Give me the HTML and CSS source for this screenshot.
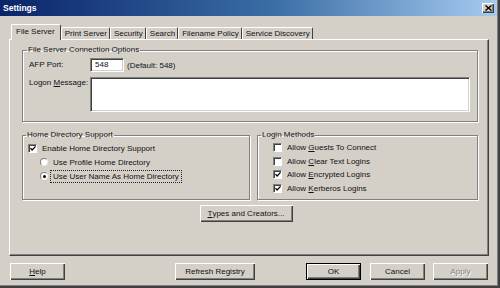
FILE: index.html
```html
<!DOCTYPE html>
<html lang="en">
<head>
    <meta charset="UTF-8">
    <title>Settings</title>
    <link rel="stylesheet" href="styles.css">
</head>
<body>
    <div class="window">
        <div class="titlebar">
            <span class="title">Settings</span>
            <span class="close-btn">
                <svg width="7" height="6" viewBox="0 0 7 6"><path d="M0.5 0.5 L6.5 5.5 M6.5 0.5 L0.5 5.5" stroke="#000" stroke-width="1.4"/></svg>
            </span>
        </div>

        <div class="tabs">
            <div class="tab active">File Server</div>
            <div class="tab">Print Server</div>
            <div class="tab">Security</div>
            <div class="tab">Search</div>
            <div class="tab">Filename Policy</div>
            <div class="tab">Service Discovery</div>
        </div>

        <div class="panel">
            <fieldset class="group group-conn">
                <legend>File Server Connection Options</legend>
                <div class="field-row">
                    <label class="field-label">AFP Port:</label>
                    <div class="textbox port">548</div>
                    <span class="hint">(Default: 548)</span>
                </div>
                <div class="field-row">
                    <label class="field-label">Logon <u>M</u>essage:</label>
                    <div class="textbox message"></div>
                </div>
            </fieldset>

            <div class="group-row">
                <fieldset class="group group-home">
                    <legend>Home Directory Support</legend>
                    <div class="opt">
                        <span class="check"><svg width="7" height="7" viewBox="0 0 7 7"><path d="M0.5 3 L2.5 5.2 L6.5 1" stroke="#000" stroke-width="1.5" fill="none"/></svg></span>
                        <span>Enable Home Directory Support</span>
                    </div>
                    <div class="opt sub">
                        <span class="radio"></span>
                        <span>Use Profile Home Directory</span>
                    </div>
                    <div class="opt sub">
                        <span class="radio on"></span>
                        <span class="focused">Use User Name As Home Directory</span>
                    </div>
                </fieldset>

                <fieldset class="group group-login">
                    <legend>Login Methods</legend>
                    <div class="opt">
                        <span class="check"></span>
                        <span>Allow <u>G</u>uests To Connect</span>
                    </div>
                    <div class="opt">
                        <span class="check"></span>
                        <span>Allow <u>C</u>lear Text Logins</span>
                    </div>
                    <div class="opt">
                        <span class="check"><svg width="7" height="7" viewBox="0 0 7 7"><path d="M0.5 3 L2.5 5.2 L6.5 1" stroke="#000" stroke-width="1.5" fill="none"/></svg></span>
                        <span>Allow <u>E</u>ncrypted Logins</span>
                    </div>
                    <div class="opt">
                        <span class="check"><svg width="7" height="7" viewBox="0 0 7 7"><path d="M0.5 3 L2.5 5.2 L6.5 1" stroke="#000" stroke-width="1.5" fill="none"/></svg></span>
                        <span>Allow <u>K</u>erberos Logins</span>
                    </div>
                </fieldset>
            </div>

            <div class="button types-btn"><u>T</u>ypes and Creators...</div>
        </div>

        <div class="button-bar">
            <div class="button help-btn"><u>H</u>elp</div>
            <div class="button refresh-btn">Refresh Registry</div>
            <div class="button ok-btn default">OK</div>
            <div class="button cancel-btn">Cancel</div>
            <div class="button apply-btn disabled">Apply</div>
        </div>
    </div>
</body>
</html>
```

FILE: styles.css
```css
* {
    box-sizing: border-box;
}

body {
    margin: 0;
    padding: 0;
    font-family: 'Liberation Sans', Arial, sans-serif;
    font-size: 8px;
    color: #111;
    background-color: #d4d0c8;
}

.window {
    width: 500px;
    height: 288px;
    background-color: #d4d0c8;
    box-shadow: inset -2px -2px 0 #404040, inset -3px -3px 0 #808080;
    display: flex;
    flex-direction: column;
}

.titlebar {
    height: 16px;
    width: 497px;
    background: linear-gradient(to right, #0a246a, #3a6ea5 55%, #a6caf0);
    display: flex;
    align-items: center;
    justify-content: space-between;
    padding: 0 3px 0 3px;
}

.title {
    color: #fff;
    font-weight: bold;
    font-size: 8.5px;
}

.close-btn {
    width: 12px;
    height: 10px;
    background-color: #d4d0c8;
    box-shadow: inset 1px 1px 0 #fff, inset -1px -1px 0 #404040, inset -2px -2px 0 #808080;
    display: flex;
    align-items: center;
    justify-content: center;
}

/* tab strip */
.tabs {
    display: flex;
    align-items: flex-end;
    margin-top: 8px;
    padding-left: 11px;
    height: 15px;
    position: relative;
    z-index: 1;
}

.tab {
    height: 12px;
    padding: 0 2px 0 3px;
    line-height: 11px;
    border-top: 1px solid #fff;
    border-left: 1px solid #fff;
    border-right: 1px solid #404040;
    border-radius: 2px 2px 0 0;
    white-space: nowrap;
}

.tab.active {
    height: 16px;
    margin-bottom: -1px;
    background-color: #d4d0c8;
    line-height: 13px;
    padding: 0 5px 0 4px;
}

.panel {
    margin-left: 9px;
    width: 480px;
    height: 217px;
    border-top: 1px solid #fff;
    border-left: 1px solid #fff;
    border-right: 1px solid #404040;
    border-bottom: 1px solid #404040;
    box-shadow: inset -1px -1px 0 #808080;
    padding: 5px 10px 0 12px;
    display: flex;
    flex-direction: column;
}

/* group boxes */
.group {
    margin: 0;
    border: 1px solid #808080;
    box-shadow: 1px 1px 0 #fff, inset 1px 1px 0 #fff;
    min-width: 0;
}

.group legend {
    padding: 0 1px;
    line-height: 10px;
}

.group-conn {
    padding: 3px 7px 9px 6px;
}

.group-conn legend {
    margin-left: -2px;
}

.field-row {
    display: flex;
    align-items: center;
}

.field-row + .field-row {
    margin-top: 5px;
    align-items: flex-start;
}

.field-label {
    width: 61px;
    line-height: 12px;
}

.textbox {
    background-color: #fff;
    border-top: 1px solid #808080;
    border-left: 1px solid #808080;
    border-right: 1px solid #fff;
    border-bottom: 1px solid #fff;
    box-shadow: inset 1px 1px 0 #404040, inset -1px -1px 0 #d4d0c8;
}

.port {
    width: 34px;
    height: 14px;
    line-height: 12px;
    padding-left: 4px;
}

.hint {
    margin-left: 3px;
}

.message {
    flex: 1;
    height: 35px;
}

.group-row {
    display: flex;
    gap: 7px;
    margin-top: 8px;
}

.group-home {
    width: 228px;
    padding: 1px 5px 4px 5px;
}

.group-home legend {
    margin-left: -2px;
}

.group-login {
    flex: 1;
    padding: 1px 5px 4px 15px;
}

.group-login legend {
    margin-left: -12px;
}

.opt {
    display: flex;
    align-items: center;
    height: 14px;
    white-space: nowrap;
}

.group-login .opt {
    height: 13.5px;
}

.opt.sub {
    padding-left: 12px;
}

.check {
    width: 9px;
    height: 9px;
    margin-right: 5px;
    background-color: #fff;
    border-top: 1px solid #808080;
    border-left: 1px solid #808080;
    border-right: 1px solid #fff;
    border-bottom: 1px solid #fff;
    box-shadow: inset 1px 1px 0 #404040;
    display: flex;
    align-items: center;
    justify-content: center;
    padding-left: 1px;
}

.radio {
    width: 8px;
    height: 8px;
    margin-right: 5px;
    border-radius: 50%;
    background-color: #fff;
    border: 1px solid #808080;
    border-right-color: #eee;
    border-bottom-color: #eee;
    display: flex;
    align-items: center;
    justify-content: center;
}

.radio.on::after {
    content: '';
    width: 3px;
    height: 3px;
    border-radius: 50%;
    background-color: #000;
}

.focused {
    outline: 1px dotted #222;
    outline-offset: 1px;
    padding: 0 1px;
    margin-left: -1px;
}

/* push buttons */
.button {
    height: 17px;
    background-color: #d4d0c8;
    box-shadow: inset 1px 1px 0 #fff, inset -1px -1px 0 #404040, inset -2px -2px 0 #808080;
    display: flex;
    align-items: center;
    justify-content: center;
    white-space: nowrap;
}

.types-btn {
    width: 93px;
    margin-top: 5px;
    align-self: center;
    margin-left: -8px;
}

.button-bar {
    display: flex;
    margin-top: 7px;
    padding-left: 10px;
}

.help-btn {
    width: 55px;
}

.refresh-btn {
    width: 80px;
    margin-left: 110px;
}

.ok-btn {
    width: 55px;
    margin-left: 51px;
}

.button.default {
    border: 1px solid #000;
}

.cancel-btn {
    width: 55px;
    margin-left: 9px;
}

.apply-btn {
    width: 55px;
    margin-left: 8px;
}

.button.disabled {
    color: #808080;
    text-shadow: 1px 1px 0 #fff;
}
```
